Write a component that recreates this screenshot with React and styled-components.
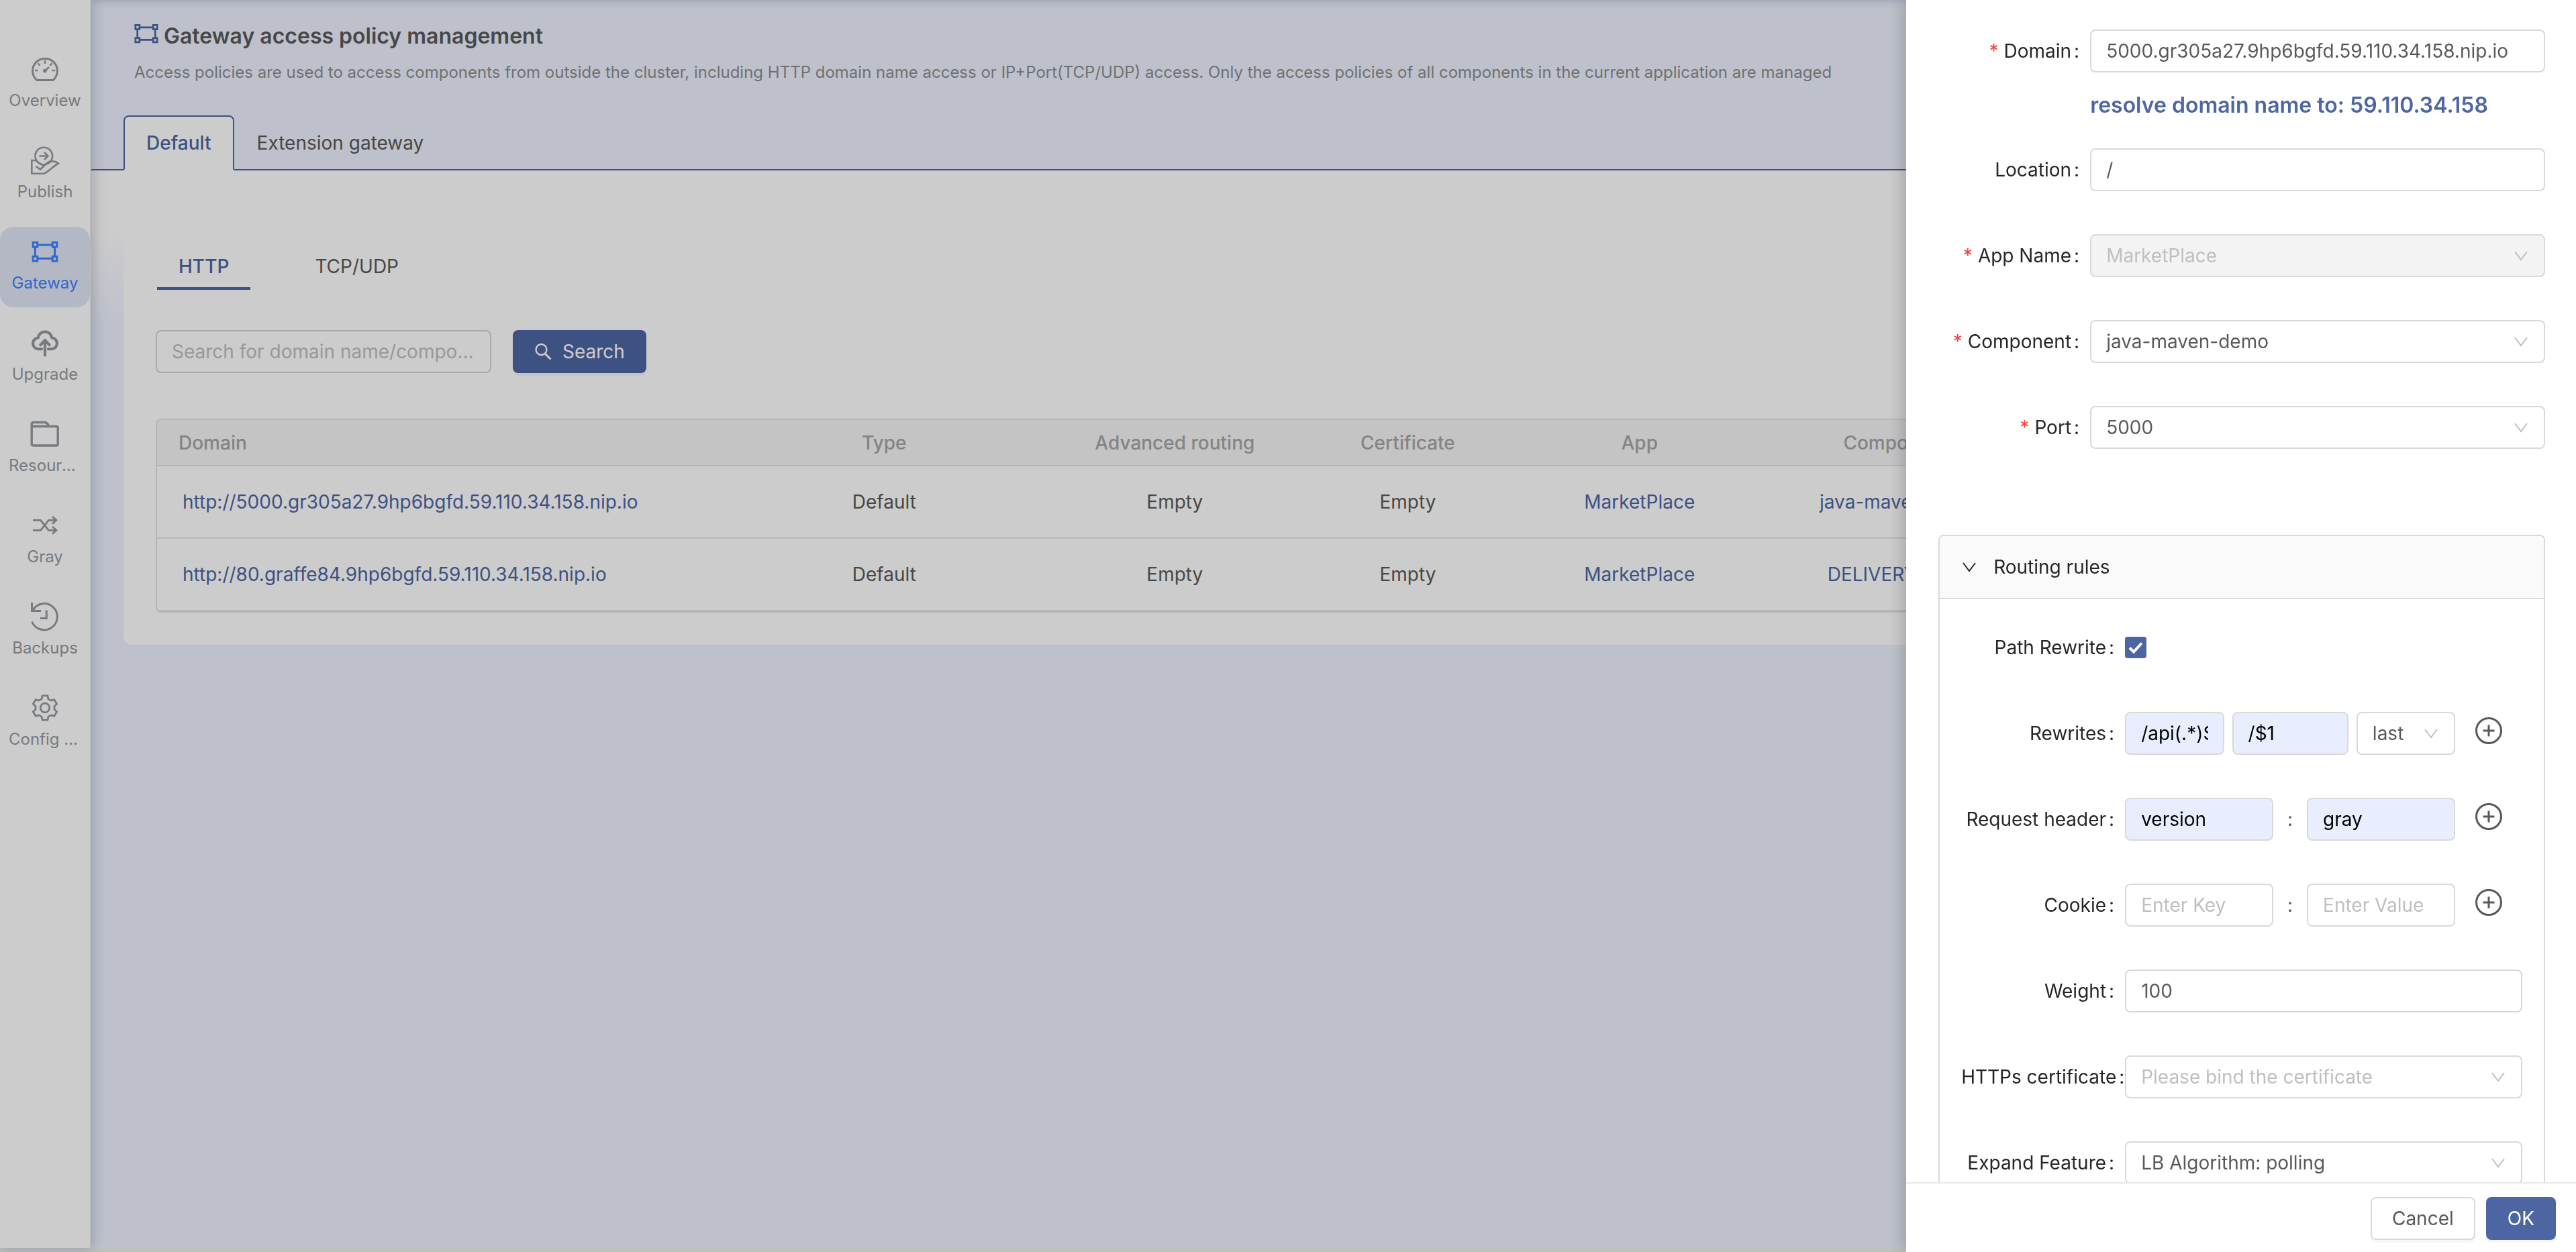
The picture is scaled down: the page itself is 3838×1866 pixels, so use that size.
import React from "react";
import styled, { createGlobalStyle, css } from "styled-components";

const color = {
  primary: "#4d66a3",
  active: "#3b82ff",
  page: "#eef2fe",
  text: "#595959",
  heading: "#262626",
  muted: "#8c8c8c",
  nav: "#959aa0",
  placeholder: "#bfbfbf",
  border: "#d9d9d9",
  line: "#e4e4e4",
  danger: "#f5443c",
  filled: "#e8eefe",
};

const GlobalStyle = createGlobalStyle`
  *, *::before, *::after { box-sizing: border-box; }
  body {
    margin: 0;
    color: ${color.text};
    background: ${color.page};
    font-family: Inter, "Liberation Sans", sans-serif;
    font-size: 28px;
    line-height: 40px;
  }
  button, input, select { font: inherit; color: inherit; }
  a { color: ${color.primary}; text-decoration: none; }
`;

/* ---------- page frame ---------- */

const Shell = styled.div`
  display: grid;
  grid-template-columns: 136px minmax(0, 1fr);
  grid-template-rows: 1fr 6px;
  height: 100vh;
  overflow: hidden;
`;

const Sidebar = styled.nav`
  z-index: 1;
  display: flex;
  flex-direction: column;
  gap: 16px;
  padding-top: 66px;
  background: #fff;
  border-right: 2px solid #e6e6e6;
  box-shadow: 2px 0 18px rgba(70, 70, 120, 0.3);
`;

const NavItem = styled.a`
  display: flex;
  flex-direction: column;
  align-items: center;
  gap: 7px;
  height: 120px;
  padding-top: 15px;
  border-radius: 20px;
  font-size: 24px;
  line-height: 36px;
  color: ${(p) => (p.$active ? color.active : color.nav)};
  background: ${(p) => (p.$active ? "#e1e6f6" : "transparent")};
`;

const NavLabel = styled.span`
  max-width: 108px;
  overflow: hidden;
  text-overflow: ellipsis;
  white-space: nowrap;
`;

const Strip = styled.div`
  grid-column: 1 / -1;
  background: #eff0f1;
`;

const Main = styled.main`
  display: flex;
  flex-direction: column;
  background: ${color.page};
`;

const PageHeader = styled.header`
  padding-top: 30px;
  box-shadow: inset 0 12px 12px -10px rgba(70, 70, 120, 0.25);
`;

const TitleRow = styled.div`
  display: flex;
  align-items: center;
  gap: 6px;
  padding: 0 62px;
`;

const TitleIcon = styled.span`
  display: flex;
  height: 48px;
  color: ${color.primary};
`;

const Title = styled.h1`
  margin: 0;
  font-size: 32px;
  font-weight: 600;
  line-height: 48px;
  color: ${color.text};
`;

const Description = styled.p`
  margin: 12px 64px 46px;
  font-size: 24px;
  line-height: 36px;
  color: ${color.muted};
`;

const CardTabs = styled.div`
  display: flex;
  padding: 0 48px;
  border-bottom: 2px solid ${color.primary};
`;

const CardTab = styled.button`
  height: 82px;
  margin-bottom: -2px;
  padding: 0 32px;
  border: 2px solid transparent;
  border-radius: 8px 8px 0 0;
  background: none;
  ${(p) =>
    p.$active &&
    css`
      color: ${color.primary};
      font-weight: 500;
      background: #fff;
      border-color: ${color.primary} ${color.primary} #fff;
    `}
`;

const Body = styled.div`
  flex: 1;
  padding: 0 48px;
  background: linear-gradient(#fff 0, #fff 86px, ${color.page} 226px);
`;

const Card = styled.section`
  padding: 112px 48px 48px;
  background: #fff;
  border-radius: 0 0 12px 12px;
`;

const LineTabs = styled.div`
  display: flex;
  gap: 64px;
  padding-left: 2px;
`;

const LineTab = styled.button`
  padding: 11px 32px;
  border: 0;
  border-bottom: 4px solid ${(p) => (p.$active ? color.primary : "transparent")};
  background: none;
  color: ${(p) => (p.$active ? color.primary : color.text)};
  font-weight: ${(p) => (p.$active ? 500 : 400)};
`;

const SearchRow = styled.form`
  display: flex;
  gap: 32px;
  margin: 60px 0 68px;
`;

/* ---------- controls ---------- */

const Input = styled.input`
  flex: 1 1 ${(p) => p.$basis || 220}px;
  min-width: 0;
  width: 100%;
  height: 64px;
  padding: 0 22px;
  border: 2px solid ${(p) => p.$line || color.border};
  border-radius: 8px;
  outline: none;
  text-overflow: ${(p) => (p.$filled ? "clip" : "ellipsis")};
  color: ${(p) => (p.$filled ? "#000" : color.text)};
  background: ${(p) => (p.$filled ? color.filled : "transparent")};
  &::placeholder {
    color: ${color.placeholder};
    opacity: 1;
  }
`;

const SearchInput = styled(Input)`
  flex: none;
  width: 500px;
`;

const Button = styled.button`
  display: flex;
  align-items: center;
  justify-content: center;
  gap: 16px;
  height: 64px;
  padding: 0 30px;
  border: 2px solid ${(p) => (p.$primary ? color.primary : color.border)};
  border-radius: 8px;
  color: ${(p) => (p.$primary ? "#fff" : color.text)};
  background: ${(p) => (p.$primary ? color.primary : "#fff")};
  box-shadow: 0 4px 0 rgba(0, 0, 0, 0.035);
`;

const SelectWrap = styled.span`
  display: grid;
  flex: 1 1 ${(p) => p.$basis || 220}px;
  min-width: 0;
  align-items: center;
  color: ${color.placeholder};
  > * {
    grid-area: 1 / 1;
  }
  > svg {
    justify-self: end;
    margin-right: 24px;
    pointer-events: none;
  }
`;

const NativeSelect = styled.select`
  width: 100%;
  height: 64px;
  padding: 0 22px;
  border: 2px solid ${color.border};
  border-radius: 8px;
  appearance: none;
  outline: none;
  opacity: 1;
  color: ${(p) => (p.$empty ? color.placeholder : color.text)};
  background: transparent;
  &:disabled {
    color: ${color.placeholder};
    background: #f3f3f3;
  }
`;

const Checkbox = styled.input`
  appearance: none;
  width: 32px;
  height: 32px;
  margin: 0;
  border-radius: 4px;
  background: ${color.primary};
`;

const CheckWrap = styled.span`
  display: grid;
  color: #fff;
  > * {
    grid-area: 1 / 1;
  }
  > svg {
    pointer-events: none;
  }
`;

const AddButton = styled.button`
  display: flex;
  width: 40px;
  height: 56px;
  margin-left: 18px;
  padding: 0;
  align-items: center;
  border: 0;
  background: none;
`;

/* ---------- table ---------- */

const TableFrame = styled.div`
  overflow: hidden;
  border: 2px solid ${color.line};
  border-radius: 8px;
`;

const Table = styled.table`
  width: 100%;
  table-layout: fixed;
  border-collapse: collapse;
`;

const HeadCell = styled.th`
  width: ${(p) => p.$width};
  height: 68px;
  padding: 0 32px;
  border-bottom: 2px solid ${color.line};
  background: #f5f5f7;
  color: #a6a6a6;
  font-weight: 500;
  text-align: ${(p) => p.$align || "center"};
  white-space: nowrap;
`;

const Cell = styled.td`
  height: 108px;
  padding: 0 38px;
  border-bottom: 2px solid ${color.line};
  text-align: ${(p) => p.$align || "center"};
  white-space: nowrap;
`;

/* ---------- drawer ---------- */

const Mask = styled.div`
  position: fixed;
  inset: 0;
  z-index: 2;
  background: rgba(0, 0, 0, 0.2);
`;

const Drawer = styled.aside`
  position: fixed;
  inset: 0 0 0 auto;
  z-index: 3;
  display: flex;
  flex-direction: column;
  width: 26%;
  min-width: 900px;
  background: #fff;
  box-shadow: -4px 0 24px rgba(0, 0, 0, 0.22);
`;

const DrawerBody = styled.form`
  flex: 1;
  min-height: 0;
  overflow: hidden;
  padding: 44px 46px 0 48px;
`;

const DrawerFooter = styled.footer`
  display: flex;
  justify-content: flex-end;
  gap: 16px;
  padding: 20px 30px 18px;
  border-top: 2px solid #e8e8e8;
`;

const Field = styled.div`
  display: grid;
  grid-template-columns: ${(p) => (p.$nested ? 244 : 226)}px minmax(0, 1fr);
  align-items: center;
  min-height: 64px;
  margin-bottom: ${(p) => (p.$tight ? 0 : 64)}px;
`;

const FieldLabel = styled.label`
  color: ${color.heading};
  text-align: right;
  white-space: nowrap;
`;

const Required = styled.span`
  margin-right: 8px;
  color: ${color.danger};
`;

const Colon = styled.span`
  margin: 0 16px 0 4px;
`;

const Hint = styled.p`
  margin: 25px 0 40px 226px;
  font-size: 32px;
  font-weight: 600;
  line-height: 48px;
  color: ${color.primary};
`;

const Controls = styled.div`
  display: flex;
  gap: 12px;
  padding-right: 30px;
`;

const Group = styled.section`
  margin-top: 128px;
  border: 2px solid ${color.border};
  border-radius: 8px;
`;

const GroupHeader = styled.button`
  display: flex;
  align-items: center;
  gap: 24px;
  width: 100%;
  height: 94px;
  padding: 0 32px;
  border: 0;
  border-bottom: 2px solid ${color.border};
  border-radius: 8px 8px 0 0;
  color: ${color.heading};
  background: #fafafa;
`;

const GroupBody = styled.div`
  padding: 40px 32px 0;
`;

const Pair = styled.div`
  display: flex;
  flex: 1;
  align-items: center;
  min-width: 0;
`;

const PairColon = styled.span`
  flex: none;
  width: 50px;
  text-align: center;
`;

/* ---------- icons ---------- */

const Icon = ({ size = 44, children, stroke = 3, box = 44, join = "miter" }) => (
  <svg
    width={size}
    height={size}
    viewBox={`0 0 ${box} ${box}`}
    fill="none"
    stroke="currentColor"
    strokeWidth={stroke}
    strokeLinejoin={join}
    aria-hidden="true"
  >
    {children}
  </svg>
);

const GaugeIcon = () => (
  <Icon join="round">
    <path d="M10 38.5a18.4 18.4 0 1 1 24 0z" />
    <path d="M22 9v5M7 24h4.500M32.500 24H37M11.500 13.500l3.200 3.200M32.500 13.500l-3.200 3.200" strokeWidth="2.500" />
    <path d="M22 24.500l6-5.500" strokeWidth="3" />
    <circle cx="21.800" cy="24.600" r="2.800" fill="currentColor" stroke="none" />
  </Icon>
);

const PublishIcon = () => (
  <Icon stroke={2.6}>
    <circle cx="20.300" cy="15.500" r="12.800" />
    <path d="M13.500 15.500h13M21 10l5.500 5.500L21 21" />
    <path d="M8.500 22H2.300v19.700H21C28 38 35 30.500 42 26.500 37 22.500 30 22.500 25.500 25.500L15 35.500 8.500 31M8.500 22c3 3.500 8 5 11.500 8.300" />
  </Icon>
);

const GatewayIcon = ({ size }) => (
  <Icon size={size} stroke={3}>
    <path d="M11.500 12h21M11.500 32.300h21M7.400 16v12.500M36.600 16v12.500" />
    <path d="M4.200 8.200h6.600v6.900H4.200zM33.200 8.200h6.600v6.900h-6.600zM4.200 29.200h6.600v6.900H4.200zM33.200 29.200h6.600v6.900h-6.600z" />
  </Icon>
);

const UpgradeIcon = () => (
  <Icon stroke={4.2} join="round">
    <path d="M17 31.200H11.500A8.500 8.500 0 0 1 11.800 14.300A10.300 10.300 0 0 1 32.200 14.300A8.500 8.500 0 0 1 32.500 31.200H27" strokeLinecap="round" />
    <path d="M22 40.500V18M15.500 25l6.500-7 6.500 7" strokeLinecap="round" />
  </Icon>
);

const FolderIcon = () => (
  <Icon stroke={3.4} join="round">
    <path d="M2.200 11V6.500a2 2 0 0 1 2-2H21q5 0 6.500 6" />
    <rect x="2.200" y="10.500" width="39" height="28.500" rx="2" />
  </Icon>
);

const ShuffleIcon = () => (
  <Icon stroke={2.8}>
    <path d="M4 14.300h11.500l12 15H39M4 29.300h11.500l12-15H39" />
    <path d="M33 9l6 5.300-6 5.300M33 24l6 5.300-6 5.300" />
  </Icon>
);

const HistoryIcon = () => (
  <Icon stroke={3}>
    <path d="M3.500 13A19.600 19.600 0 1 1 2.600 29.500" />
    <path d="M2.500 1v12.500H16M24.300 12.500v12H15" />
  </Icon>
);

const gearPath = Array.from({ length: 6 })
  .flatMap((_, i) =>
    [
      [14.2, -20],
      [18.6, -12],
      [18.6, 12],
      [14.2, 20],
    ].map(([r, offset]) => {
      const angle = ((i * 60 - 90 + offset) * Math.PI) / 180;
      return `${(22 + r * Math.cos(angle)).toFixed(1)},${(22 + r * Math.sin(angle)).toFixed(1)}`;
    })
  )
  .join(" ");

const GearIcon = () => (
  <Icon stroke={2.8} join="round">
    <polygon points={gearPath} />
    <circle cx="22" cy="22" r="6.800" />
  </Icon>
);

const SearchIcon = () => (
  <Icon size={26} box={26} stroke={2.4}>
    <circle cx="10.500" cy="10" r="8" />
    <path d="M16 16l8.500 8.500" strokeWidth="3" />
  </Icon>
);

const ChevronIcon = () => (
  <Icon size={24} box={24} stroke={2}>
    <path d="M3 6l9 12 9-12" />
  </Icon>
);

const CheckIcon = () => (
  <Icon size={32} box={32} stroke={4}>
    <path d="M7 16.500l6 6L25 9.500" />
  </Icon>
);

const PlusCircleIcon = () => (
  <Icon size={40} box={40}>
    <circle cx="20" cy="20" r="18.500" />
    <path d="M20 11.500v17M11.500 20h17" />
  </Icon>
);

/* ---------- composed parts ---------- */

const navItems = [
  { label: "Overview", icon: GaugeIcon },
  { label: "Publish", icon: PublishIcon },
  { label: "Gateway", icon: GatewayIcon, active: true },
  { label: "Upgrade", icon: UpgradeIcon },
  { label: "Resources", icon: FolderIcon },
  { label: "Gray", icon: ShuffleIcon },
  { label: "Backups", icon: HistoryIcon },
  { label: "Config Groups", icon: GearIcon },
];

const columns = [
  { title: "Domain", width: "23.3%", align: "left" },
  { title: "Type", width: "15.2%" },
  { title: "Advanced routing", width: "9.5%" },
  { title: "Certificate", width: "10.3%" },
  { title: "App", width: "9.4%" },
  { title: "Components", width: "12.8%" },
  { title: "Operation", width: "19.5%" },
];

const rows = [
  { domain: "http://5000.gr305a27.9hp6bgfd.59.110.34.158.nip.io", component: "java-maven-demo" },
  { domain: "http://80.graffe84.9hp6bgfd.59.110.34.158.nip.io", component: "DELIVERY-demo" },
];

const Label = ({ htmlFor, required, children }) => (
  <FieldLabel htmlFor={htmlFor}>
    {required && <Required>*</Required>}
    {children}
    <Colon>:</Colon>
  </FieldLabel>
);

const Select = ({ id, value, label, basis, ...rest }) => (
  <SelectWrap $basis={basis}>
    <NativeSelect id={id} aria-label={label} {...rest}>
      <option>{value}</option>
    </NativeSelect>
    <ChevronIcon />
  </SelectWrap>
);

const Adder = ({ label }) => (
  <AddButton type="button" aria-label={label}>
    <PlusCircleIcon />
  </AddButton>
);

const KeyValueField = ({ id, label, name, value }) => (
  <Field $nested>
    <Label htmlFor={id}>{label}</Label>
    <Controls>
      <Pair>
        <Input id={id} defaultValue={name} placeholder="Enter Key" $filled={Boolean(name)} />
        <PairColon>:</PairColon>
        <Input aria-label={`${label} value`} defaultValue={value} placeholder="Enter Value" $filled={Boolean(value)} />
      </Pair>
      <Adder label={`Add ${label}`} />
    </Controls>
  </Field>
);

export default function App() {
  return (
    <>
      <GlobalStyle />
      <Shell>
        <Sidebar>
          {navItems.map(({ label, icon: NavIcon, active }) => (
            <NavItem key={label} href="#" $active={active}>
              <NavIcon />
              <NavLabel>{label}</NavLabel>
            </NavItem>
          ))}
        </Sidebar>

        <Main>
          <PageHeader>
            <TitleRow>
              <TitleIcon>
                <GatewayIcon size={40} />
              </TitleIcon>
              <Title>Gateway access policy management</Title>
            </TitleRow>
            <Description>
              Access policies are used to access components from outside the cluster, including HTTP domain name
              access or IP+Port(TCP/UDP) access. Only the access policies of all components in the current
              application are managed
            </Description>
            <CardTabs>
              <CardTab type="button" $active>
                Default
              </CardTab>
              <CardTab type="button">Extension gateway</CardTab>
            </CardTabs>
          </PageHeader>

          <Body>
            <Card>
              <LineTabs>
                <LineTab type="button" $active>
                  HTTP
                </LineTab>
                <LineTab type="button">TCP/UDP</LineTab>
              </LineTabs>
              <SearchRow>
                <SearchInput
                  $line="#d4d4d4"
                  aria-label="Search"
                  placeholder="Search for domain name/component name"
                />
                <Button type="button" $primary>
                  <SearchIcon />
                  Search
                </Button>
              </SearchRow>
              <TableFrame>
                <Table>
                  <thead>
                    <tr>
                      {columns.map((c) => (
                        <HeadCell key={c.title} $width={c.width} $align={c.align}>
                          {c.title}
                        </HeadCell>
                      ))}
                    </tr>
                  </thead>
                  <tbody>
                    {rows.map((r) => (
                      <tr key={r.domain}>
                        <Cell $align="left">
                          <a href="#">{r.domain}</a>
                        </Cell>
                        <Cell>Default</Cell>
                        <Cell>Empty</Cell>
                        <Cell>Empty</Cell>
                        <Cell>
                          <a href="#">MarketPlace</a>
                        </Cell>
                        <Cell>
                          <a href="#">{r.component}</a>
                        </Cell>
                        <Cell />
                      </tr>
                    ))}
                  </tbody>
                </Table>
              </TableFrame>
            </Card>
          </Body>
        </Main>
        <Strip />
      </Shell>

      <Mask />

      <Drawer>
        <DrawerBody>
          <Field $tight>
            <Label htmlFor="domain" required>
              Domain
            </Label>
            <Input id="domain" defaultValue="5000.gr305a27.9hp6bgfd.59.110.34.158.nip.io" />
          </Field>
          <Hint>resolve domain name to: 59.110.34.158</Hint>
          <Field>
            <Label htmlFor="location">Location</Label>
            <Input id="location" defaultValue="/" />
          </Field>
          <Field>
            <Label htmlFor="app" required>
              App Name
            </Label>
            <Select id="app" value="MarketPlace" disabled />
          </Field>
          <Field>
            <Label htmlFor="component" required>
              Component
            </Label>
            <Select id="component" value="java-maven-demo" />
          </Field>
          <Field $tight>
            <Label htmlFor="port" required>
              Port
            </Label>
            <Select id="port" value="5000" />
          </Field>

          <Group>
            <GroupHeader type="button">
              <ChevronIcon />
              Routing rules
            </GroupHeader>
            <GroupBody>
              <Field $nested>
                <Label htmlFor="rewrite">Path Rewrite</Label>
                <CheckWrap>
                  <Checkbox id="rewrite" type="checkbox" defaultChecked />
                  <CheckIcon />
                </CheckWrap>
              </Field>
              <Field $nested>
                <Label htmlFor="rewrites">Rewrites</Label>
                <Controls>
                  <Input id="rewrites" $filled $basis={148} defaultValue="/api(.*)$1" />
                  <Input aria-label="Rewrite target" $filled $basis={174} defaultValue="/$1" />
                  <Select label="Rewrite flag" basis={148} value="last" />
                  <Adder label="Add rewrite" />
                </Controls>
              </Field>
              <KeyValueField id="header" label="Request header" name="version" value="gray" />
              <KeyValueField id="cookie" label="Cookie" />
              <Field $nested>
                <Label htmlFor="weight">Weight</Label>
                <Input id="weight" defaultValue="100" />
              </Field>
              <Field $nested>
                <Label htmlFor="certificate">HTTPs certificate</Label>
                <Select id="certificate" value="Please bind the certificate" $empty />
              </Field>
              <Field $nested>
                <Label htmlFor="feature">Expand Feature</Label>
                <Select id="feature" value="LB Algorithm: polling" />
              </Field>
            </GroupBody>
          </Group>
        </DrawerBody>
        <DrawerFooter>
          <Button type="button">Cancel</Button>
          <Button type="button" $primary>
            OK
          </Button>
        </DrawerFooter>
      </Drawer>
    </>
  );
}
